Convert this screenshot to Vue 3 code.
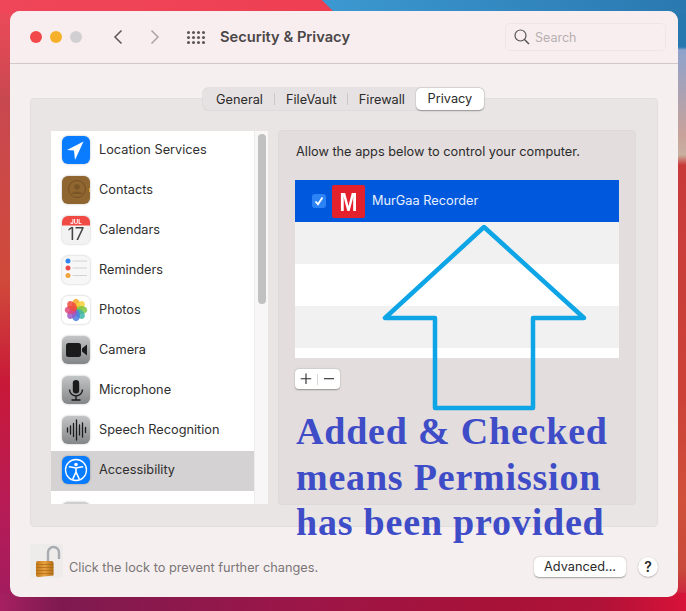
<template>
  <div class="page">
    <div class="window">
      <header class="titlebar">
        <div class="lights">
          <span class="light red"></span>
          <span class="light yellow"></span>
          <span class="light grey"></span>
        </div>
        <svg class="chevron back" width="10" height="16" viewBox="0 0 10 16"><path d="M8.500 1.500 2 8l6.500 6.500" /></svg>
        <svg class="chevron fwd" width="10" height="16" viewBox="0 0 10 16"><path d="M1.500 1.500 8 8l-6.500 6.500" /></svg>
        <div class="grid-btn">
          <span v-for="n in 12" :key="n"></span>
        </div>
        <div class="title">Security &amp; Privacy</div>
        <div class="search">
          <svg width="16" height="16" viewBox="0 0 16 16" fill="none" stroke="#555" stroke-width="1.200"><circle cx="6.500" cy="6.500" r="5.500" /><path d="M10.500 10.500 15 15" stroke-width="1.500" /></svg>
          <span>Search</span>
        </div>
      </header>

      <div class="content">
        <div class="tabs">
          <span class="tab general">General</span>
          <i></i>
          <span class="tab vault">FileVault</span>
          <i></i>
          <span class="tab firewall">Firewall</span>
          <span class="tab active">Privacy</span>
        </div>

        <section class="panel">
          <div class="sidebar">
            <ul class="list">
              <li v-for="item in services" :key="item.name" :class="{ selected: item.selected }">
                <svg class="app-icon" width="28" height="28" viewBox="0 0 28 28">
                  <template v-if="item.icon === 'location'">
                    <rect width="28" height="28" rx="6" fill="#0a7cff" />
                    <path d="M21.500 5.500 5 14l7 .5 1 9.500z" fill="#fff" />
                  </template>
                  <template v-else-if="item.icon === 'contacts'">
                    <rect width="28" height="28" rx="6" fill="#8f6530" />
                    <circle cx="15" cy="13" r="8.500" fill="none" stroke="#6e4b22" stroke-width="0.800" />
                    <circle cx="15" cy="11" r="2.800" fill="#7a5527" />
                    <path d="M9.500 18c1-3.500 10-3.500 11 0z" fill="#7a5527" />
                    <path d="M27 12h1v4h-1z" fill="#d9a23c" />
                  </template>
                  <template v-else-if="item.icon === 'calendar'">
                    <rect width="28" height="28" rx="6" fill="#f3f2f2" />
                    <path d="M0 9.500V6a6 6 0 0 1 6-6h16a6 6 0 0 1 6 6v3.500z" fill="#f04a45" />
                    <text x="14" y="7.500" text-anchor="middle" class="cal-month">JUL</text>
                    <text x="14" y="24" text-anchor="middle" class="cal-day">17</text>
                  </template>
                  <template v-else-if="item.icon === 'reminders'">
                    <rect width="28" height="28" rx="6" fill="#f8f7f7" />
                    <circle cx="6" cy="5" r="2.500" fill="#2f86ee" />
                    <circle cx="6" cy="12" r="2.500" fill="#ef4a4a" />
                    <circle cx="6" cy="19.500" r="2.500" fill="#f2a33a" />
                    <path d="M10.500 5H25M10.500 12H25M10.500 19.500H25" stroke="#c9c9c9" stroke-width="0.800" />
                  </template>
                  <template v-else-if="item.icon === 'photos'">
                    <rect width="28" height="28" rx="6" fill="#fff" />
                    <g style="mix-blend-mode: multiply">
                      <ellipse v-for="p in petals" :key="p.a" cx="14" cy="8.500" rx="4" ry="5.800" :fill="p.c" opacity="0.850" :transform="`rotate(${p.a} 14 14)`" />
                    </g>
                  </template>
                  <template v-else-if="item.icon === 'camera'">
                    <rect width="28" height="28" rx="6" fill="url(#greyFill)" />
                    <rect x="4" y="7" width="15" height="14" rx="2.500" fill="#1b1b1b" />
                    <path d="M20 12.500 25 8.500v11l-5-4z" fill="#1b1b1b" />
                  </template>
                  <template v-else-if="item.icon === 'mic'">
                    <rect width="28" height="28" rx="6" fill="url(#greyFill)" />
                    <rect x="10.800" y="4" width="6.400" height="13.500" rx="3.200" fill="#1b1b1b" />
                    <path d="M7.500 13.500a6.500 6.500 0 0 0 13 0M14 20v4M9.500 24h9" fill="none" stroke="#1b1b1b" stroke-width="1.400" />
                  </template>
                  <template v-else-if="item.icon === 'speech'">
                    <rect width="28" height="28" rx="6" fill="url(#greyFill)" />
                    <path d="M5.500 12v4M8.500 10v8M11.500 7.500v13M14.500 4v20M17.500 9v10M20.500 7v14M23.500 11.500v5" stroke="#1b1b1b" stroke-width="1.300" stroke-linecap="round" />
                  </template>
                  <template v-else-if="item.icon === 'access'">
                    <rect width="28" height="28" rx="6" fill="#0a7cff" />
                    <circle cx="14" cy="14" r="10.500" fill="none" stroke="#fff" stroke-width="1.300" />
                    <circle cx="14" cy="8.500" r="1.800" fill="#fff" />
                    <path d="M7.500 10.800 14 12l6.500-1.200M14 12v4.500M14 16l-3 6.500M14 16l3 6.500" fill="none" stroke="#fff" stroke-width="1.600" stroke-linecap="round" />
                  </template>
                  <rect v-else width="28" height="28" rx="6" fill="#cfcdcd" />
                </svg>
                <span>{{ item.name }}</span>
              </li>
            </ul>
            <div class="track"><div class="thumb"></div></div>
          </div>

          <div class="detail">
            <p class="hint">Allow the apps below to control your computer.</p>
            <div class="apps">
              <div v-for="(row, i) in rows" :key="i" class="app-row" :class="row">
                <template v-if="row === 'picked'">
                  <span class="check">
                    <svg width="10" height="10" viewBox="0 0 10 10"><path d="M1.500 5.500 4 8.200 8.500 1.500" fill="none" stroke="#fff" stroke-width="1.800" /></svg>
                  </span>
                  <span class="logo"><b>M</b></span>
                  <span class="app-name">MurGaa Recorder</span>
                </template>
              </div>
            </div>
            <div class="add-remove">
              <svg width="22" height="20" viewBox="0 0 22 20"><path d="M11 4.500v10.500M5.700 9.700h10.500" stroke="#2b2b2b" stroke-width="1.100" /></svg>
              <i></i>
              <svg width="22" height="20" viewBox="0 0 22 20"><path d="M6 9.700h10" stroke="#2b2b2b" stroke-width="1.100" /></svg>
            </div>
          </div>
        </section>

        <footer class="foot">
          <div class="lock">
            <svg width="33" height="34" viewBox="0 0 33 34">
              <defs>
                <linearGradient id="lockBody" x1="0" y1="0" x2="1" y2="0">
                  <stop offset="0" stop-color="#c07818" />
                  <stop offset="0.500" stop-color="#e8a040" />
                  <stop offset="1" stop-color="#b06c14" />
                </linearGradient>
              </defs>
              <path d="M18 17V8.500a5.500 5.500 0 0 1 11 0V15" fill="none" stroke="#a8acb0" stroke-width="2.400" />
              <path d="M8 17h13.500q2 0 2 2v12.500L8 33q-2 0-2-2V19q0-2 2-2z" fill="url(#lockBody)" />
              <path d="M6 20.500h17.500M6 23.500h17.500M6 26.500h17.500M6 29.500h17.500" stroke="#a96a14" stroke-width="0.700" />
            </svg>
          </div>
          <span class="lock-text">Click the lock to prevent further changes.</span>
          <button class="advanced">Advanced...</button>
          <button class="help">?</button>
        </footer>
      </div>

      <!-- annotation pasted over the screenshot -->
      <svg class="arrow" width="210" height="190" viewBox="0 0 210 190">
        <path d="M105 3 6 94h50v90h98V94h51z" fill="none" stroke="#0ea5e6" stroke-width="4.500" stroke-linejoin="round" />
      </svg>
      <div class="note">Added &amp; Checked<br />means Permission<br />has been provided</div>
    </div>

    <svg width="0" height="0" class="defs">
      <defs>
        <linearGradient id="greyFill" x1="0" y1="0" x2="0" y2="1">
          <stop offset="0" stop-color="#c2c5c6" />
          <stop offset="1" stop-color="#848687" />
        </linearGradient>
      </defs>
    </svg>
  </div>
</template>

<script setup>
const services = [
  { name: 'Location Services', icon: 'location' },
  { name: 'Contacts', icon: 'contacts' },
  { name: 'Calendars', icon: 'calendar' },
  { name: 'Reminders', icon: 'reminders' },
  { name: 'Photos', icon: 'photos' },
  { name: 'Camera', icon: 'camera' },
  { name: 'Microphone', icon: 'mic' },
  { name: 'Speech Recognition', icon: 'speech' },
  { name: 'Accessibility', icon: 'access', selected: true },
  { name: '', icon: 'more' }
]

const petals = [
  { a: 0, c: '#f5a623' },
  { a: 45, c: '#f7d038' },
  { a: 90, c: '#7cc543' },
  { a: 135, c: '#3fb6a8' },
  { a: 180, c: '#4a7fe0' },
  { a: 225, c: '#9b59c6' },
  { a: 270, c: '#e0457b' },
  { a: 315, c: '#ef4c3c' }
]

const rows = ['picked', 'odd', 'even', 'odd', 'even']
</script>

<style>
body {
  margin: 0;
}
</style>

<style scoped>
.page {
  width: 686px;
  height: 611px;
  box-sizing: border-box;
  padding: 11px 8px 14px 10px;
  overflow: hidden;
  font-family: Inter, "Liberation Sans", sans-serif;
  color: #2b2b2b;
  /* wallpaper only shows as a thin frame: top, bottom, right, left */
  background:
    linear-gradient(45deg, #f0465a 0, #ee3f52 237px, #3c98d0 238px, #2a78b0 100%) 0 0 / 100% 14px no-repeat,
    linear-gradient(90deg, #a62060 0, #7e1a50 60px, #9c1648 300px, #a81238 500px, #b01238 600px, #d81238 100%) 0 100% / 100% 18px no-repeat,
    linear-gradient(180deg, #2878b0 0, #2878b0 47px, #8ea2cc 50px, #c8a29a 135px, #c8b0a0 155px, #c83a3a 165px, #cc4238 400px, #d0503a 500px, #c84a3a 570px, #d01840 600px) 100% 0 / 16px 100% no-repeat,
    linear-gradient(180deg, #f04a5a 0, #c84850 100px, #d04a3a 280px, #c81838 385px, #b81c55 500px, #a01c60 611px);
}

.defs {
  position: absolute;
}

.window {
  position: relative;
  width: 668px;
  height: 586px;
  border-radius: 10px;
  background: #f6eff0;
  overflow: hidden;
}

.titlebar {
  height: 52px;
  display: flex;
  align-items: center;
  background: #f9eeef;
  border-bottom: 1px solid #cfc9ca;
}

.lights {
  display: flex;
  gap: 8px;
  margin-left: 20px;
}

.light {
  width: 12px;
  height: 12px;
  border-radius: 50%;
}

.red { background: #f2484a; }
.yellow { background: #f7b02a; }
.grey { background: #d2cfd2; }

.chevron {
  fill: none;
  stroke: #5a5657;
  stroke-width: 1.500;
}

.back { margin-left: 31px; }
.fwd { margin-left: 27px; stroke: #a9a5a6; }

.grid-btn {
  display: grid;
  grid-template-columns: repeat(4, 3px);
  gap: 2px 2px;
  margin-left: 27px;
}

.grid-btn span {
  width: 3px;
  height: 3px;
  border-radius: 50%;
  background: #5a5657;
}

.title {
  margin-left: 15px;
  font-size: 14.700px;
  font-weight: 600;
  color: #4b4748;
}

.search {
  display: flex;
  align-items: center;
  gap: 5px;
  width: 161px;
  height: 28px;
  box-sizing: border-box;
  margin-left: auto;
  margin-right: 12px;
  padding-left: 8px;
  border: 1px solid #eee5e6;
  border-radius: 5px;
  font-size: 12.500px;
  color: #b6b0b1;
}

.content {
  padding: 24px 20px 0;
}

.tabs {
  position: relative;
  z-index: 1;
  display: flex;
  align-items: center;
  width: 281px;
  height: 22px;
  margin: 0 0 -12px 173px;
  background: #e6e1e2;
  border-radius: 5px;
  box-shadow: 0 0 0 0.500px #d6d1d2;
  font-size: 12.750px;
}

.tabs i {
  width: 1px;
  height: 12px;
  background: #cbc6c7;
}

.tab.general { margin-left: 13px; margin-right: 11px; }
.tab.vault { margin-left: 11px; margin-right: 10px; }
.tab.firewall { margin-left: 11px; margin-right: 11px; }

.tab.active {
  width: 68px;
  height: 22px;
  line-height: 22px;
  text-align: center;
  background: #fff;
  border-radius: 5px;
  box-shadow: 0 0.500px 1.500px rgba(0, 0, 0, 0.35);
}

.panel {
  display: flex;
  height: 429px;
  box-sizing: border-box;
  padding: 21px 21px 0 20px;
  background: #e9e5e5;
  border: 1px solid #e2dedf;
  border-radius: 4px;
}

.sidebar {
  display: flex;
  flex: none;
  width: 217px;
  height: 373px;
  margin-top: 11px;
  overflow: hidden;
}

.list {
  width: 203px;
  margin: 0;
  padding: 0;
  list-style: none;
  background: #fff;
  overflow: hidden;
}

.list li {
  display: flex;
  align-items: flex-start;
  height: 40px;
  box-sizing: border-box;
  padding: 5px 0 0 11px;
  font-size: 12.750px;
}

.list li span {
  margin-left: 9px;
  line-height: 28px;
  color: #2f2f2f;
}

.list li.selected {
  background: #d4d2d2;
}

.list li:last-child {
  padding-top: 11px;
}

.app-icon {
  flex-shrink: 0;
  filter: drop-shadow(0 0.500px 1px rgba(0, 0, 0, 0.25));
}

.cal-month {
  font: 700 6px Inter, sans-serif;
  fill: #fff;
}

.cal-day {
  font: 400 17px Inter, sans-serif;
  fill: #444;
}

.track {
  width: 14px;
  background: #f8f6f6;
  padding: 3px 2px 0 4px;
  box-sizing: border-box;
  border-left: 1px solid #ececec;
}

.thumb {
  width: 8px;
  height: 170px;
  border-radius: 4px;
  background: #c1c1c1;
  margin-left: -1px;
}

.detail {
  flex: none;
  width: 358px;
  height: 375px;
  box-sizing: border-box;
  margin-top: 10px;
  margin-left: 10px;
  padding: 0 16px;
  background: #e3dddd;
  border: 1px solid #dfd9d9;
  border-radius: 4px;
}

.hint {
  margin: 13px 0 20px;
  padding-left: 1px;
  font-size: 12.750px;
  line-height: 16px;
}

.apps {
  height: 178px;
  overflow: hidden;
}

.app-row {
  display: flex;
  align-items: center;
  height: 42px;
}

.app-row.picked { background: #0059dd; color: #fff; }
.app-row.odd { background: #f2f1f2; }
.app-row.even { background: #fff; }

.check {
  display: flex;
  align-items: center;
  justify-content: center;
  width: 14px;
  height: 14px;
  margin-left: 17px;
  border-radius: 3px;
  background: #2b83f6;
}

.logo {
  width: 33px;
  height: 33px;
  margin-left: 6px;
  background: #e3212c;
  border-radius: 2px;
  font: 700 25px/35px "Liberation Sans", sans-serif;
  text-align: center;
  color: #fff;
}

.logo b {
  display: inline-block;
  transform: scaleX(0.86);
}

.app-name {
  margin-left: 7px;
  margin-top: -2px;
  font-size: 12.750px;
  color: #e8f0ff;
}

.add-remove {
  display: flex;
  align-items: center;
  width: 45px;
  height: 20px;
  margin-top: 11px;
  background: #fff;
  border-radius: 4px;
  box-shadow: 0 0.500px 1.500px rgba(0, 0, 0, 0.35);
}

.add-remove i {
  width: 1px;
  height: 11px;
  background: #d8d8d8;
}

.foot {
  position: relative;
  display: flex;
  align-items: center;
  height: 34px;
  margin-top: 17px;
}

.lock {
  width: 33px;
  height: 34px;
  background: #eeebeb;
  border-radius: 3px;
}

.lock-text {
  margin-left: 6px;
  margin-top: 12px;
  font-size: 12.750px;
  color: #7a7677;
}

.advanced {
  width: 92px;
  height: 20px;
  margin-left: auto;
  margin-top: 11px;
  padding: 0;
  border: 0;
  background: #fff;
  border-radius: 5px;
  box-shadow: 0 0.500px 1.500px rgba(0, 0, 0, 0.35);
  font: 12.750px Inter, sans-serif;
  color: #2b2b2b;
}

.help {
  width: 20px;
  height: 20px;
  margin-left: 12px;
  margin-top: 11px;
  padding: 0;
  border: 0;
  border-radius: 50%;
  background: #fff;
  box-shadow: 0 0.500px 1.500px rgba(0, 0, 0, 0.35);
  font: 600 14px Inter, sans-serif;
  color: #2b2b2b;
}

.arrow {
  position: absolute;
  left: 369px;
  top: 213px;
}

.note {
  position: absolute;
  left: 286px;
  top: 398px;
  font-family: "Liberation Serif", serif;
  font-weight: 700;
  font-size: 38px;
  letter-spacing: 0.800px;
  line-height: 45.500px;
  color: #3f4cc7;
  white-space: nowrap;
}
</style>
